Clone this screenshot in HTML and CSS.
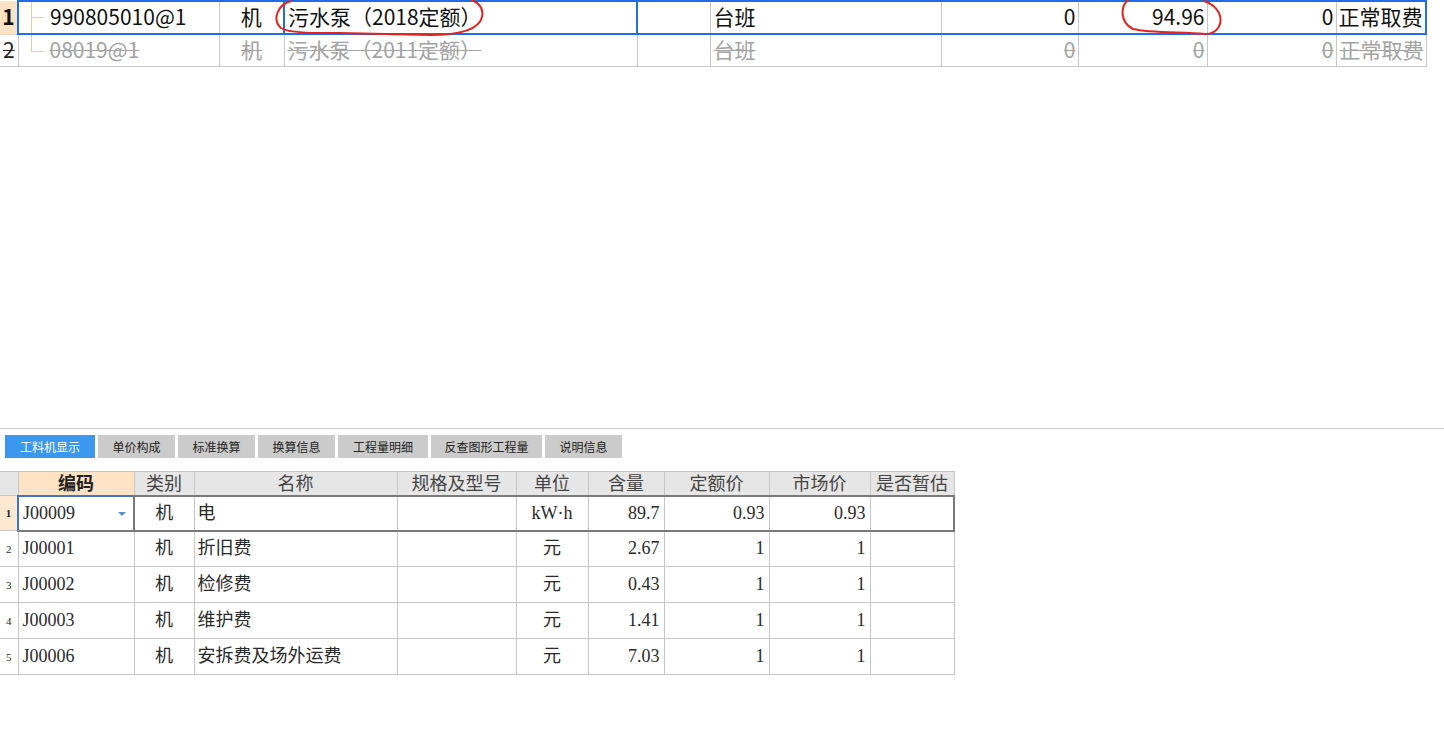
FILE: index.html
```html
<!DOCTYPE html>
<html lang="zh-CN">
<head>
<meta charset="utf-8">
<title>工料机</title>
<link rel="stylesheet" href="styles.css">
</head>
<body>
<section class="top">
  <table class="tt">
    <colgroup>
      <col class="w-rn"><col class="w-code"><col class="w-type"><col class="w-name"><col class="w-spec"><col class="w-unit"><col class="w-n1"><col class="w-n2"><col class="w-n3"><col class="w-fee">
    </colgroup>
    <tr class="sel">
      <td class="rn">1</td>
      <td class="code first"><div class="codewrap"><span class="tree tee"></span><span class="ctext">990805010@1</span></div></td>
      <td class="ctr">机</td>
      <td class="name">污水泵（2018定额）</td>
      <td></td>
      <td>台班</td>
      <td class="num">0</td>
      <td class="num">94.96</td>
      <td class="num">0</td>
      <td class="last">正常取费</td>
    </tr>
    <tr class="del">
      <td class="rn"><s>2</s></td>
      <td class="code"><div class="codewrap"><span class="tree elbow"></span><s class="ctext">08019@1</s></div></td>
      <td class="ctr"><s>机</s></td>
      <td><s>污水泵（2011定额）</s></td>
      <td></td>
      <td><s>台班</s></td>
      <td class="num"><s>0</s></td>
      <td class="num"><s>0</s></td>
      <td class="num"><s>0</s></td>
      <td><s>正常取费</s></td>
    </tr>
  </table>
</section>

<section class="bottom">
  <nav class="tabs">
    <div class="tab active t1">工料机显示</div>
    <div class="tab t2">单价构成</div>
    <div class="tab t2">标准换算</div>
    <div class="tab t2">换算信息</div>
    <div class="tab t1">工程量明细</div>
    <div class="tab t3">反查图形工程量</div>
    <div class="tab t2">说明信息</div>
  </nav>

  <table class="bt">
    <colgroup>
      <col class="b-rn"><col class="b-code"><col class="b-type"><col class="b-name"><col class="b-spec"><col class="b-unit"><col class="b-qty"><col class="b-p1"><col class="b-p2"><col class="b-est">
    </colgroup>
    <thead>
      <tr>
        <th class="corner"></th>
        <th class="hl strong">编码</th>
        <th>类别</th>
        <th>名称</th>
        <th>规格及型号</th>
        <th>单位</th>
        <th>含量</th>
        <th>定额价</th>
        <th>市场价</th>
        <th>是否暂估</th>
      </tr>
    </thead>
    <tbody>
      <tr class="cur">
        <td class="rn hl strong">1</td>
        <td class="code focus lat"><div class="cellflex"><span>J00009</span><span class="dd"></span></div></td>
        <td class="ctr">机</td>
        <td>电</td>
        <td></td>
        <td class="ctr lat">kW·h</td>
        <td class="num lat">89.7</td>
        <td class="num lat">0.93</td>
        <td class="num lat">0.93</td>
        <td></td>
      </tr>
      <tr>
        <td class="rn">2</td>
        <td class="code lat">J00001</td>
        <td class="ctr">机</td>
        <td>折旧费</td>
        <td></td>
        <td class="ctr">元</td>
        <td class="num lat">2.67</td>
        <td class="num lat">1</td>
        <td class="num lat">1</td>
        <td></td>
      </tr>
      <tr>
        <td class="rn">3</td>
        <td class="code lat">J00002</td>
        <td class="ctr">机</td>
        <td>检修费</td>
        <td></td>
        <td class="ctr">元</td>
        <td class="num lat">0.43</td>
        <td class="num lat">1</td>
        <td class="num lat">1</td>
        <td></td>
      </tr>
      <tr>
        <td class="rn">4</td>
        <td class="code lat">J00003</td>
        <td class="ctr">机</td>
        <td>维护费</td>
        <td></td>
        <td class="ctr">元</td>
        <td class="num lat">1.41</td>
        <td class="num lat">1</td>
        <td class="num lat">1</td>
        <td></td>
      </tr>
      <tr>
        <td class="rn">5</td>
        <td class="code lat">J00006</td>
        <td class="ctr">机</td>
        <td>安拆费及场外运费</td>
        <td></td>
        <td class="ctr">元</td>
        <td class="num lat">7.03</td>
        <td class="num lat">1</td>
        <td class="num lat">1</td>
        <td></td>
      </tr>
    </tbody>
  </table>
</section>

<svg class="marks" width="1444" height="40" viewBox="0 0 1444 40" aria-hidden="true">
  <path d="M291 1 C 277 5, 272 20, 281 28 C 289 33, 310 33, 340 33 L 430 35 C 462 35, 479 29, 482 17 C 484 9, 479 3, 472 0" />
  <path d="M1128 0 C 1121 6, 1119 22, 1133 29 C 1150 33, 1180 32, 1205 34 C 1219 34, 1223 22, 1219 13 C 1216 7, 1210 3, 1204 1" />
</svg>
</body>
</html>
```

FILE: styles.css
```css
* { box-sizing: border-box; }

html, body {
  margin: 0;
  padding: 0;
  background: #ffffff;
}

body {
  position: relative;
  width: 1444px;
  height: 752px;
  overflow: hidden;
  font-family: "Noto Sans CJK SC", "Noto Sans", sans-serif;
  color: #111;
}

/* ---------- top grid ---------- */
.top {
  height: 428px;
}

.tt {
  border-collapse: collapse;
  table-layout: fixed;
  width: 1426px;
  font-size: 21px;
}

.w-rn { width: 18px; }
.w-code { width: 201px; }
.w-type { width: 65px; }
.w-name { width: 353px; }
.w-spec { width: 73px; }
.w-unit { width: 231px; }
.w-n1 { width: 137px; }
.w-n2 { width: 129px; }
.w-n3 { width: 129px; }
.w-fee { width: 90px; }

.tt td {
  height: 32px;
  padding: 0 3px 3px;
  border: 1px solid #c9c9c9;
  line-height: 24px;
  white-space: nowrap;
  overflow: hidden;
  vertical-align: middle;
}

.tt td.rn {
  border-left: none;
  padding: 0 0 3px;
  text-align: center;
}

.tt td.num { text-align: right; padding-right: 2px; }
.tt td.ctr { text-align: center; }
.tt td.code { padding: 0 0 0 12px; }

.codewrap {
  display: flex;
  align-items: stretch;
  height: 31px;
  gap: 6px;
}
.codewrap .ctext { align-self: center; margin-bottom: 3px; }

.tree { width: 13px; flex: none; }
.tree.tee {
  background:
    linear-gradient(#e3cda8, #e3cda8) left top / 1px 100% no-repeat,
    linear-gradient(#e3cda8, #e3cda8) left 15px / 100% 1px no-repeat;
}
.tree.elbow {
  height: 17px;
  border-left: 1px solid #e3cda8;
  border-bottom: 1px solid #e3cda8;
}

.tt tr.sel td {
  border-top: 2px solid #1f6ee6;
  border-bottom: 2px solid #1f6ee6;
  color: #111;
}
.tt tr.sel td.rn {
  background: #fde2c3;
  font-weight: 700;
  border-top: none;
  border-bottom: 1px solid #e6d6c2;
}
.tt tr.sel td.first { border-left: 2px solid #1f6ee6; }
.tt tr.sel td.name {
  border-left: 2px solid #1f6ee6;
  border-right: 2px solid #1f6ee6;
  padding-left: 3px;
}
.tt tr.sel td.last { border-right: 2px solid #1f6ee6; padding-left: 2px; }

.tt tr.del td { color: #a3a3a3; }
.tt tr.del td.rn { color: #222; }
.tt tr.del s { text-decoration-thickness: 1px; }

/* red hand-drawn marks */
.marks {
  position: absolute;
  left: 0;
  top: 0;
  pointer-events: none;
}
.marks path {
  fill: none;
  stroke: #e3231f;
  stroke-width: 2;
  stroke-linecap: round;
  stroke-linejoin: round;
}

/* ---------- bottom panel ---------- */
.bottom {
  border-top: 1px solid #cdcdcd;
}

.tabs {
  display: flex;
  gap: 3px;
  padding: 6px 0 0 5px;
  height: 29px;
}

.tab {
  height: 23px;
  background: #cbcbcb;
  color: #222;
  font-size: 12px;
  display: flex;
  align-items: center;
  justify-content: center;
  white-space: nowrap;
}
.tab.t1 { width: 90px; }
.tab.t2 { width: 77px; }
.tab.t3 { width: 111px; }
.tab.active {
  background: #3c97ef;
  color: #ffffff;
}

.bt {
  margin-top: 13px;
  border-collapse: collapse;
  table-layout: fixed;
  width: 954px;
  font-size: 18px;
  color: #2a2a2a;
}

.b-rn { width: 18px; }
.b-code { width: 116px; }
.b-type { width: 60px; }
.b-name { width: 203px; }
.b-spec { width: 119px; }
.b-unit { width: 72px; }
.b-qty { width: 76px; }
.b-p1 { width: 105px; }
.b-p2 { width: 101px; }
.b-est { width: 84px; }

.bt th {
  height: 24px;
  padding: 0 0 2px;
  background: #e6e6e6;
  border: 1px solid #c6c6c6;
  font-weight: 400;
  color: #444;
  line-height: 20px;
  text-align: center;
  white-space: nowrap;
}
.bt th.corner { border-left: none; }
.bt th.hl { background: #fde3c4; }
.bt .strong { font-weight: 700; color: #222; }

.bt td {
  height: 36px;
  padding: 0 3px 5px;
  border: 1px solid #c6c6c6;
  line-height: 22px;
  white-space: nowrap;
  overflow: hidden;
  vertical-align: middle;
}
.bt td.lat {
  font-family: "Liberation Serif", serif;
  font-size: 18px;
  padding-bottom: 1px;
}
.bt td.rn {
  border-left: none;
  padding: 0;
  text-align: center;
  font-family: "Liberation Serif", serif;
  font-size: 11px;
}
.bt td.hl { background: #fde8d2; }
.bt td.ctr { text-align: center; }
.bt td.num { text-align: right; padding-right: 4px; }
.bt td.code { padding-left: 4px; }

.cellflex {
  display: flex;
  align-items: center;
  justify-content: space-between;
  padding-right: 4px;
}

.dd {
  width: 0;
  height: 0;
  border-left: 4px solid transparent;
  border-right: 4px solid transparent;
  border-top: 4px solid #5b8dc9;
  margin-top: 2px;
}

.bt tr.cur td {
  height: 35px;
  border-top: 2px solid #7a7a7a;
  border-bottom: 2px solid #7a7a7a;
}
.bt tr.cur td.rn {
  border-top: 1px solid #c6c6c6;
  border-bottom: 1px solid #c6c6c6;
}
.bt tr.cur td.focus {
  border-top: 2px solid #3f74c6;
  border-left: 2px solid #3f74c6;
  border-right: 2px solid #7a7a7a;
}
.bt tr.cur td:last-child { border-right: 2px solid #7a7a7a; }
```
